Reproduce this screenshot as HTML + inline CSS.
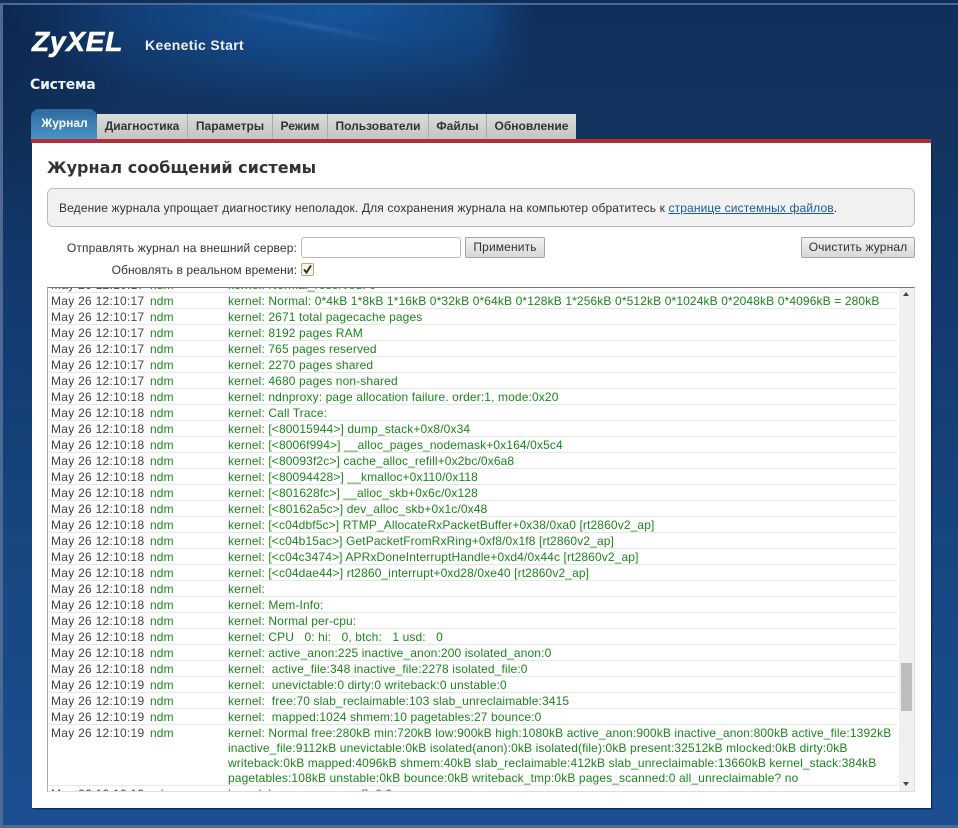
<!DOCTYPE html>
<html><head><meta charset="utf-8"><style>
html,body{margin:0;padding:0;background:#222}
body{width:958px;height:828px;overflow:hidden;position:relative;font-family:"Liberation Sans",sans-serif}
.a{position:absolute;white-space:nowrap}
#bg{left:0;top:0;width:958px;height:828px;box-sizing:border-box;background:linear-gradient(#10305c 0,#12345f 140px,#123a70 300px,#174680 550px,#1b4f92 828px)}
#frame{left:0;top:3px;width:958px;height:825px;box-sizing:border-box;border:solid #4c6a94;border-width:2px 0 3px 3px}
#glow{left:3px;top:5px;width:530px;height:130px;background:radial-gradient(ellipse 330px 100px at 330px 5px,rgba(22,88,160,.95),rgba(22,80,150,.55) 55%,rgba(22,80,150,0) 100%);-webkit-mask-image:linear-gradient(to right,#000 480px,transparent 530px);mask-image:linear-gradient(to right,#000 480px,transparent 530px)}
#lft{left:3px;top:5px;width:120px;height:240px;background:linear-gradient(to right,rgba(9,34,70,.5),rgba(9,34,70,0));-webkit-mask-image:linear-gradient(#000 60px,transparent 240px);mask-image:linear-gradient(#000 60px,transparent 240px)}
#streak{left:215px;top:24px;width:190px;height:3px;background:linear-gradient(to right,rgba(120,170,220,0),rgba(120,170,220,.28) 50%,rgba(120,170,220,0));transform:rotate(11deg);filter:blur(1.5px)}
.tab{top:114px;height:25px;box-sizing:border-box;background:linear-gradient(#dcdcdc,#c4c4c4);border-right:1px solid #aaa;color:#333;font:bold 12px/25px "Liberation Sans",sans-serif;text-align:center}
#act{left:31px;top:109px;width:66px;height:30px;background:linear-gradient(#2f6a9e,#4a94c8);border-radius:8px 8px 0 0;color:#fff;font:bold 12px/29px "Liberation Sans",sans-serif;text-align:center;padding-left:1px;box-sizing:border-box}
#red{left:31px;top:139px;width:900px;height:4px;background:#b32f35}
#panel{left:32px;top:143px;width:899px;height:665px;background:#fff;box-shadow:1px 1px 1px #0c2244}
#info{left:47px;top:188px;width:868px;height:39px;box-sizing:border-box;background:#f1f1f1;border:1px solid #bbb;border-radius:6px;font:12px/38px "Liberation Sans",sans-serif;letter-spacing:.135px;color:#333;padding-left:11px}
#info span{color:#1a5c96;text-decoration:underline}
.lbl{font:12px/16px "Liberation Sans",sans-serif;letter-spacing:.135px;color:#333;text-align:right;right:661px}
.btn{box-sizing:border-box;height:21px;top:237px;background:linear-gradient(#f2f2f2,#d8d8d8);border:1px solid #a5a5a5;border-radius:2px;font:12px/19px "Liberation Sans",sans-serif;letter-spacing:.135px;color:#333;text-align:center}
#inp{left:301px;top:237px;width:160px;height:21px;box-sizing:border-box;background:#fff;border:1px solid #bbb;border-radius:3px}
#chk{left:301px;top:263px;width:13px;height:13px;box-sizing:border-box;background:#fbf3df;border:1px solid #b5a98a;border-radius:2px}
#log{left:47px;top:287px;width:868px;height:505px;box-sizing:border-box;overflow:hidden;background:#fff;border:1px solid #aaa;border-top:1px solid #777;border-right:1px solid #ddd;border-bottom:1px solid #ddd}
#rows{position:absolute;left:0;top:-11px;width:849px;font:12px/15px "Liberation Sans",sans-serif;letter-spacing:.125px;color:#1b861b}
.r{position:relative;height:15px;padding-bottom:1px;box-shadow:inset 0 -1px 0 #e8e8e8}
.r b{font-weight:normal;position:absolute;left:3px;top:1px;color:#444;letter-spacing:.27px}
.r i{font-style:normal;position:absolute;left:102px;top:1px}
.r u{text-decoration:none;position:absolute;left:180px;top:1px;white-space:pre}
#sb{left:899px;top:288px;width:15px;height:503px;background:#f0f0f0}
#th{left:901px;top:663px;width:11px;height:48px;background:#bdbdbd}
.ar{width:0;height:0;left:903px;border-left:3.5px solid transparent;border-right:3.5px solid transparent}
</style></head><body>
<div class="a" id="bg"></div><div class="a" id="glow"></div><div class="a" id="lft"></div><div class="a" id="streak"></div><div class="a" id="frame"></div>
<div class="a" style="left:32px;top:25px;font:italic bold 28px/34px 'Liberation Sans',sans-serif;color:#fff;letter-spacing:.8px;-webkit-text-stroke:.6px #fff">ZyXEL</div>
<div class="a" style="left:145px;top:36px;font:bold 14px/18px 'Liberation Sans',sans-serif;color:#f0f4f8;letter-spacing:.35px">Keenetic Start</div>
<div class="a" style="left:30px;top:76px;font:bold 14px/18px 'DejaVu Sans',sans-serif;color:#eef2f6;letter-spacing:-.2px">Система</div>
<div class="a" id="act">Журнал</div>
<div class="a tab" style="left:97px;width:91px">Диагностика</div>
<div class="a tab" style="left:188px;width:85px">Параметры</div>
<div class="a tab" style="left:273px;width:55px">Режим</div>
<div class="a tab" style="left:328px;width:101px">Пользователи</div>
<div class="a tab" style="left:429px;width:58px">Файлы</div>
<div class="a tab" style="left:487px;width:89px;border-right:0">Обновление</div>
<div class="a" id="panel"></div><div class="a" id="red"></div>
<div class="a" style="left:47px;top:157px;font:bold 16px/22px 'DejaVu Sans',sans-serif;color:#333;letter-spacing:.02px">Журнал сообщений системы</div>
<div class="a" id="info">Ведение журнала упрощает диагностику неполадок. Для сохранения журнала на компьютер обратитесь к <span>странице системных файлов</span>.</div>
<div class="a lbl" style="top:240px">Отправлять журнал на внешний сервер:</div>
<div class="a lbl" style="top:262px;letter-spacing:.07px">Обновлять в реальном времени:</div>
<div class="a" id="inp"></div>
<div class="a btn" style="left:465px;width:80px">Применить</div>
<div class="a btn" style="left:801px;width:114px">Очистить журнал</div>
<div class="a" id="chk"><svg width="11" height="11" viewBox="0 0 11 11" style="display:block"><path d="M2 5.5L4.5 8.5L9 1.5" fill="none" stroke="#222" stroke-width="1.8"/></svg></div>
<div class="a" id="log"><div id="rows">
<div class="r"><b>May 26 12:10:17</b><i>ndm</i><u>kernel: Normal_reserved: 0</u></div>
<div class="r"><b>May 26 12:10:17</b><i>ndm</i><u>kernel: Normal: 0*4kB 1*8kB 1*16kB 0*32kB 0*64kB 0*128kB 1*256kB 0*512kB 0*1024kB 0*2048kB 0*4096kB = 280kB</u></div>
<div class="r"><b>May 26 12:10:17</b><i>ndm</i><u>kernel: 2671 total pagecache pages</u></div>
<div class="r"><b>May 26 12:10:17</b><i>ndm</i><u>kernel: 8192 pages RAM</u></div>
<div class="r"><b>May 26 12:10:17</b><i>ndm</i><u>kernel: 765 pages reserved</u></div>
<div class="r"><b>May 26 12:10:17</b><i>ndm</i><u>kernel: 2270 pages shared</u></div>
<div class="r"><b>May 26 12:10:17</b><i>ndm</i><u>kernel: 4680 pages non-shared</u></div>
<div class="r"><b>May 26 12:10:18</b><i>ndm</i><u>kernel: ndnproxy: page allocation failure. order:1, mode:0x20</u></div>
<div class="r"><b>May 26 12:10:18</b><i>ndm</i><u>kernel: Call Trace:</u></div>
<div class="r"><b>May 26 12:10:18</b><i>ndm</i><u>kernel: [&lt;80015944&gt;] dump_stack+0x8/0x34</u></div>
<div class="r"><b>May 26 12:10:18</b><i>ndm</i><u>kernel: [&lt;8006f994&gt;] __alloc_pages_nodemask+0x164/0x5c4</u></div>
<div class="r"><b>May 26 12:10:18</b><i>ndm</i><u>kernel: [&lt;80093f2c&gt;] cache_alloc_refill+0x2bc/0x6a8</u></div>
<div class="r"><b>May 26 12:10:18</b><i>ndm</i><u>kernel: [&lt;80094428&gt;] __kmalloc+0x110/0x118</u></div>
<div class="r"><b>May 26 12:10:18</b><i>ndm</i><u>kernel: [&lt;801628fc&gt;] __alloc_skb+0x6c/0x128</u></div>
<div class="r"><b>May 26 12:10:18</b><i>ndm</i><u>kernel: [&lt;80162a5c&gt;] dev_alloc_skb+0x1c/0x48</u></div>
<div class="r"><b>May 26 12:10:18</b><i>ndm</i><u>kernel: [&lt;c04dbf5c&gt;] RTMP_AllocateRxPacketBuffer+0x38/0xa0 [rt2860v2_ap]</u></div>
<div class="r"><b>May 26 12:10:18</b><i>ndm</i><u>kernel: [&lt;c04b15ac&gt;] GetPacketFromRxRing+0xf8/0x1f8 [rt2860v2_ap]</u></div>
<div class="r"><b>May 26 12:10:18</b><i>ndm</i><u>kernel: [&lt;c04c3474&gt;] APRxDoneInterruptHandle+0xd4/0x44c [rt2860v2_ap]</u></div>
<div class="r"><b>May 26 12:10:18</b><i>ndm</i><u>kernel: [&lt;c04dae44&gt;] rt2860_interrupt+0xd28/0xe40 [rt2860v2_ap]</u></div>
<div class="r"><b>May 26 12:10:18</b><i>ndm</i><u>kernel:</u></div>
<div class="r"><b>May 26 12:10:18</b><i>ndm</i><u>kernel: Mem-Info:</u></div>
<div class="r"><b>May 26 12:10:18</b><i>ndm</i><u>kernel: Normal per-cpu:</u></div>
<div class="r"><b>May 26 12:10:18</b><i>ndm</i><u>kernel: CPU   0: hi:   0, btch:   1 usd:   0</u></div>
<div class="r"><b>May 26 12:10:18</b><i>ndm</i><u>kernel: active_anon:225 inactive_anon:200 isolated_anon:0</u></div>
<div class="r"><b>May 26 12:10:18</b><i>ndm</i><u>kernel:  active_file:348 inactive_file:2278 isolated_file:0</u></div>
<div class="r"><b>May 26 12:10:19</b><i>ndm</i><u>kernel:  unevictable:0 dirty:0 writeback:0 unstable:0</u></div>
<div class="r"><b>May 26 12:10:19</b><i>ndm</i><u>kernel:  free:70 slab_reclaimable:103 slab_unreclaimable:3415</u></div>
<div class="r"><b>May 26 12:10:19</b><i>ndm</i><u>kernel:  mapped:1024 shmem:10 pagetables:27 bounce:0</u></div>
<div class="r" style="height:60px"><b>May 26 12:10:19</b><i>ndm</i><u>kernel: Normal free:280kB min:720kB low:900kB high:1080kB active_anon:900kB inactive_anon:800kB active_file:1392kB
inactive_file:9112kB unevictable:0kB isolated(anon):0kB isolated(file):0kB present:32512kB mlocked:0kB dirty:0kB
writeback:0kB mapped:4096kB shmem:40kB slab_reclaimable:412kB slab_unreclaimable:13660kB kernel_stack:384kB
pagetables:108kB unstable:0kB bounce:0kB writeback_tmp:0kB pages_scanned:0 all_unreclaimable? no</u></div>
<div class="r"><b>May 26 12:10:19</b><i>ndm</i><u>kernel: lowmem_reserve[]: 0 0</u></div>
</div></div>
<div class="a" id="sb"></div><div class="a" id="th"></div>
<div class="a ar" style="top:292px;border-bottom:4px solid #444"></div>
<div class="a ar" style="top:782px;border-top:4px solid #444"></div>
</body></html>
